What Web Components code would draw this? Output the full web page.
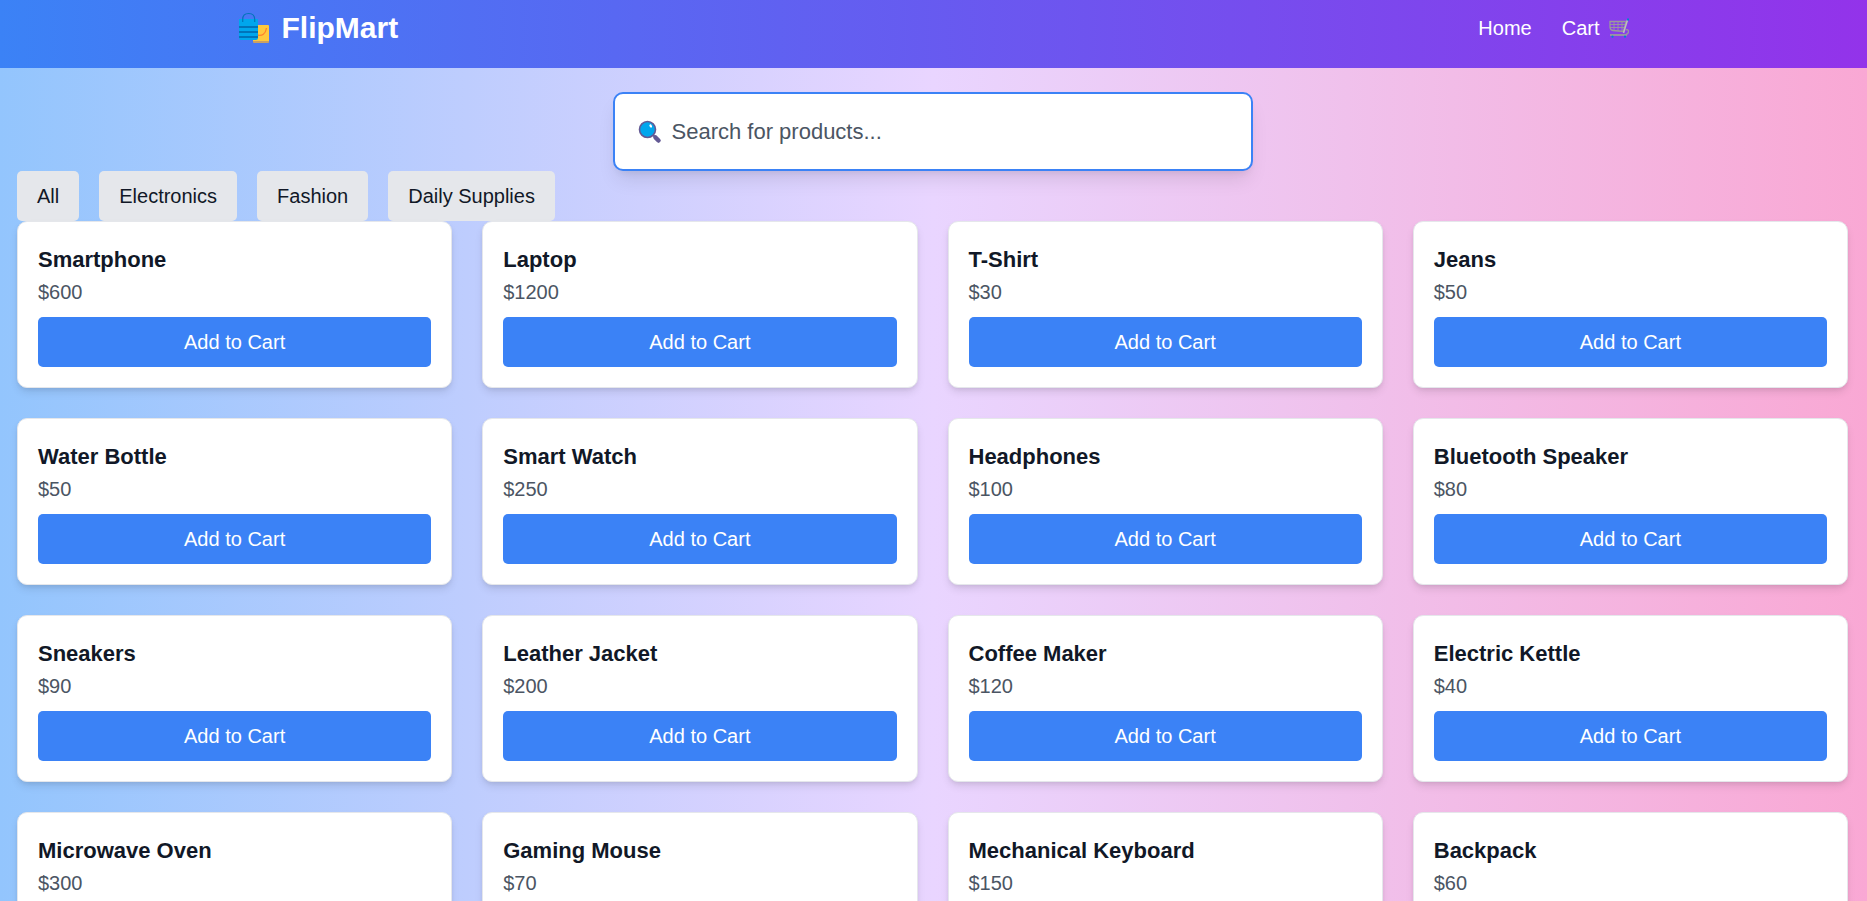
<!DOCTYPE html>
<html lang="en">
<head>
<meta charset="utf-8">
<meta name="viewport" content="width=device-width, initial-scale=1">
<title>FlipMart</title>
<style>
  html { background: linear-gradient(to right, #93c5fd, #e9d5ff, #f9a8d4); }
  body { margin: 0; font: 20px/30px "Liberation Sans", Arial, sans-serif; color: #111827; }
</style>
</head>
<body>
<flip-app></flip-app>

<script>
  const define = (name, html, setup) => {
    const template = document.createElement('template');
    template.innerHTML = '<style>*{box-sizing:border-box}</style>' + html;
    customElements.define(name, class extends HTMLElement {
      connectedCallback() {
        if (this.shadowRoot) return;
        this.attachShadow({ mode: 'open' }).append(template.content.cloneNode(true));
        if (setup) setup(this, this.shadowRoot);
      }
    });
  };

  define('icon-bags', `
    <style>:host { display: block; width: 32px; height: 32px; } svg { display: block; }</style>
    <svg width="32" height="32" viewBox="0 0 32 32" aria-hidden="true">
      <rect x="15" y="13" width="16" height="17" rx="1" fill="#ffc83d"/>
      <path d="M15 29h16v1q0 1-1 1H16q-1 0-1-1z" fill="#c9a064"/>
      <path d="M19 23q8 2 9.500-7" fill="none" stroke="#ff822d" stroke-width="1.300"/>
      <path d="M1 7h19v19q0 2-2 2H3q-2 0-2-2z" fill="#00a6ed"/>
      <path d="M1 14h19v2H1zM1 19h19v2H1zM1 24h19v2H1z" fill="#0074ba"/>
      <path d="M4.700 10V7.500q0-6 6-6t6 6V10" fill="none" stroke="#0074ba" stroke-width="1.200"/>
    </svg>`);

  define('icon-cart', `
    <style>:host { display: block; width: 22px; height: 20px; } svg { display: block; }</style>
    <svg width="22" height="20" viewBox="0 0 22 20" aria-hidden="true" fill="none" stroke="#9b9b9b">
      <path d="M2 3.500h16L15.500 13.500 5 12.500Q2 12 2 9z" stroke-width="1.300"/>
      <path d="M6 3.500v9M10 3.500v9.500M14 3.500v10M2 6.500h15M2 9.500h14.500" stroke-width=".9"/>
      <path d="M19.500 2l-4 13" stroke="#bebebe" stroke-width="1.500"/>
      <path d="M17.500 12q3-1 3 1.500T17.500 16.500" stroke-width="1.200"/>
      <path d="M2 17h17" stroke-width="1.800"/>
      <path d="M19 1.500h2" stroke="#0084ce" stroke-width="1.800"/>
      <circle cx="4.500" cy="18.700" r="1.100" fill="#0084ce" stroke="none"/>
      <circle cx="17" cy="18.700" r="1.100" fill="#0084ce" stroke="none"/>
    </svg>`);

  define('icon-search', `
    <style>:host { display: block; width: 24px; height: 24px; } svg { display: block; }</style>
    <svg width="24" height="24" viewBox="0 0 24 24" aria-hidden="true">
      <path d="M15 15l2 2" stroke="#635994" stroke-width="2"/>
      <path d="M17.500 17.500l3 3" stroke="#635994" stroke-width="4.500" stroke-linecap="round"/>
      <circle cx="9.500" cy="9.500" r="8" fill="#00a6ed" stroke="#635994" stroke-width="1.600"/>
      <ellipse cx="12.700" cy="6" rx="1.200" ry="1.700" fill="#fff" transform="rotate(-30 12.700 6)"/>
    </svg>`);

  define('site-header', `
    <style>
      :host { display: block; height: 68px; background: linear-gradient(to right, #3b82f6, #9333ea); color: #fff; }
      .bar { display: flex; justify-content: space-between; align-items: center; width: 75%; max-width: 1400px; height: 56px; margin: 0 auto; padding: 0 4px; }
      .brand { display: flex; align-items: center; gap: 12px; margin: 0; font-size: 30px; line-height: 40px; font-weight: 700; }
      nav { display: flex; gap: 30px; }
      a { display: flex; align-items: center; gap: 8px; color: inherit; text-decoration: none; }
    </style>
    <header class="bar">
      <h1 class="brand"><icon-bags></icon-bags>FlipMart</h1>
      <nav><a href="#home">Home</a><a href="#cart">Cart <icon-cart></icon-cart></a></nav>
    </header>`);

  define('search-box', `
    <style>
      :host { display: block; width: 640px; max-width: 100%; margin: 0 auto; }
      label { display: flex; align-items: center; gap: 10px; height: 79px; padding: 0 23px; background: #fff;
        border: 2px solid #3b82f6; border-radius: 10px;
        box-shadow: 0 12px 19px -4px rgb(0 0 0 / .1), 0 5px 8px -5px rgb(0 0 0 / .1); }
      input { flex: 1; min-width: 0; padding: 0; border: 0; outline: 0; background: none; color: inherit; font: inherit; font-size: 22px; }
      input::placeholder { color: #4b5563; opacity: 1; }
    </style>
    <label><icon-search></icon-search><input type="text" aria-label="Search for products" placeholder="Search for products..."></label>`);

  define('category-button', `
    <style>
      :host { display: block; }
      button { display: block; height: 50px; padding: 0 20px; border: 0; border-radius: 5px; background: #e5e7eb; color: inherit; font: inherit; cursor: pointer; }
    </style>
    <button type="button"><slot></slot></button>`);

  define('product-card', `
    <style>
      :host { display: block; padding: 20px; background: #fff; border: 1px solid #e5e7eb; border-radius: 10px;
        box-shadow: 0 5px 8px -1px rgb(0 0 0 / .1), 0 2px 5px -2px rgb(0 0 0 / .1); }
      h2 { margin: 0; font-size: 22px; line-height: 35px; font-weight: 700; }
      p { margin: 0 0 10px; color: #4b5563; }
      button { display: block; width: 100%; height: 50px; padding: 0; border: 0; border-radius: 5px; background: #3b82f6; color: #fff; font: inherit; cursor: pointer; }
    </style>
    <h2><slot></slot></h2>
    <p></p>
    <button type="button">Add to Cart</button>`,
    (host, root) => { root.querySelector('p').textContent = '$' + host.getAttribute('price'); });

  define('flip-app', `
    <style>
      :host { display: block; }
      main { padding: 24px 19px 20px 17px; }
      .filters { display: flex; flex-wrap: wrap; gap: 20px; }
      .products { display: grid; grid-template-columns: repeat(4, minmax(0, 1fr)); gap: 30px; }
    </style>
    <site-header></site-header>
    <main>
      <search-box></search-box>
      <div class="filters">
        <category-button>All</category-button>
        <category-button>Electronics</category-button>
        <category-button>Fashion</category-button>
        <category-button>Daily Supplies</category-button>
      </div>
      <section class="products" aria-label="Products"></section>
    </main>`,
    (host, root) => {
      const products = [
        ['Smartphone', 600], ['Laptop', 1200], ['T-Shirt', 30], ['Jeans', 50],
        ['Water Bottle', 50], ['Smart Watch', 250], ['Headphones', 100], ['Bluetooth Speaker', 80],
        ['Sneakers', 90], ['Leather Jacket', 200], ['Coffee Maker', 120], ['Electric Kettle', 40],
        ['Microwave Oven', 300], ['Gaming Mouse', 70], ['Mechanical Keyboard', 150], ['Backpack', 60]
      ];
      root.querySelector('.products').append(...products.map(([name, price]) => {
        const card = document.createElement('product-card');
        card.setAttribute('price', price);
        card.textContent = name;
        return card;
      }));
    });
</script>
</body>
</html>
